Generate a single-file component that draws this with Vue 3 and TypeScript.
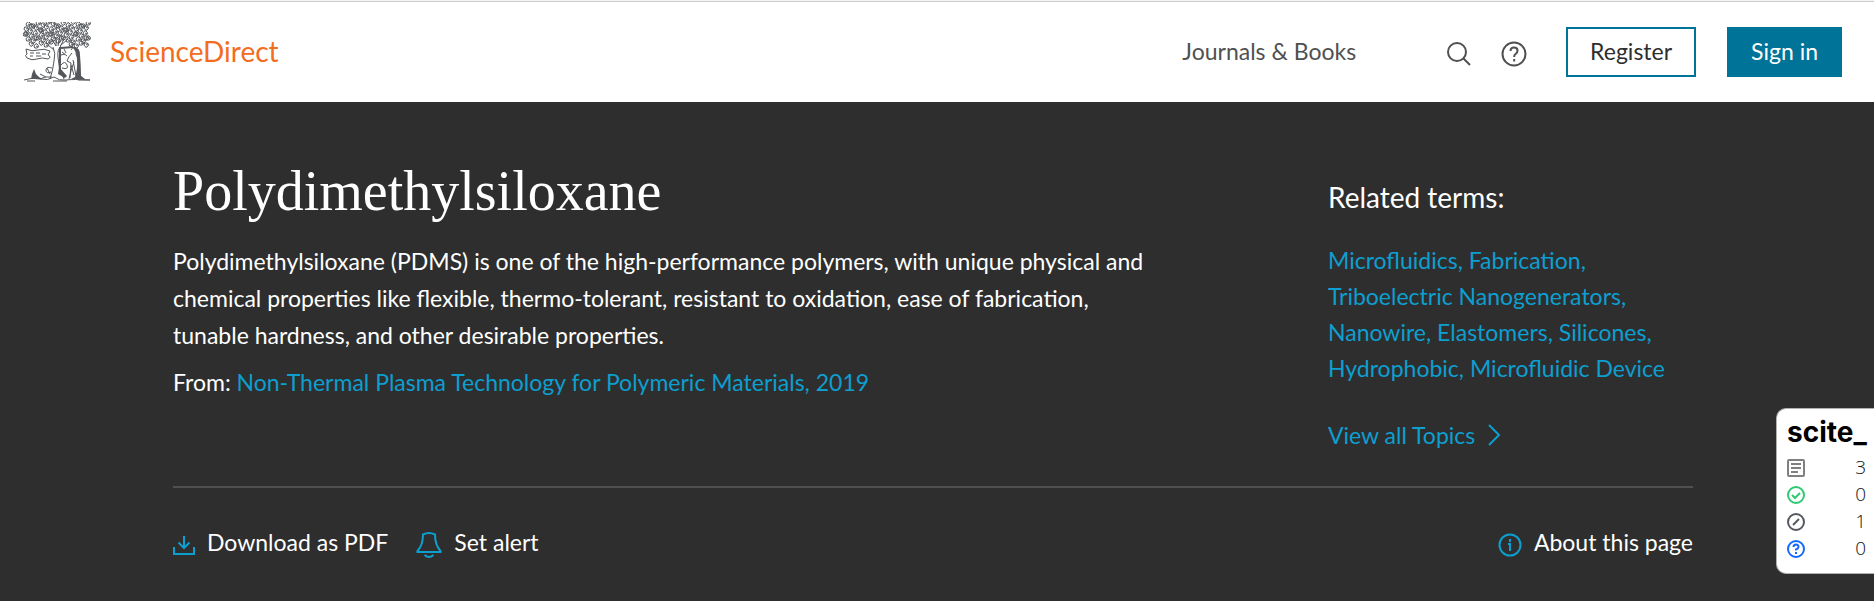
<script setup lang="ts">
interface Term {
  label: string
  last: boolean
}

interface Tally {
  kind: 'total' | 'supporting' | 'contrasting' | 'mentioning'
  label: string
  count: number
}

const terms: Term[] = [
  'Microfluidics',
  'Fabrication',
  'Triboelectric Nanogenerators',
  'Nanowire',
  'Elastomers',
  'Silicones',
  'Hydrophobic',
  'Microfluidic Device',
].map((label, i, all) => ({ label, last: i === all.length - 1 }))

const tallies: Tally[] = [
  { kind: 'total', label: 'Citing publications', count: 3 },
  { kind: 'supporting', label: 'Supporting', count: 0 },
  { kind: 'mentioning', label: 'Mentioning', count: 1 },
  { kind: 'contrasting', label: 'Unclassified', count: 0 },
]

// Curled leaves that fill the crown of the tree, row by row.
function crown(): string {
  const rows: [number, number, number][] = [
    [2, 3, 68],
    [6, 1, 68],
    [10, 0, 68],
    [14, 1, 68],
    [18, 3, 68],
    [22, 6, 30],
    [22, 46, 67],
  ]
  let d = ''
  let n = 0
  for (const [y, from, to] of rows) {
    for (let x = from; x < to - 3; x += 5) {
      n++
      const dy = ((n * 7) % 5) - 2
      const flip = n % 2 ? 1 : -1
      d += `M${x} ${y + dy}q2 ${-4 * flip} 4 ${-flip}q2 ${2 * flip} -1 ${3 * flip}q-3 ${flip} -3 ${-2 * flip}m2 0l2 ${flip}`
    }
  }
  return d
}

const crownPath = crown()
</script>

<template>
  <div class="page">
    <header class="header">
      <a class="brand" href="#">
        <svg class="tree" viewBox="0 0 68 60" aria-hidden="true">
          <path class="leaves" :d="crownPath" />
          <path class="thin" d="M30 25q3 6 1 14q-1 9-4 18M38 24q-4 4-3 11q0 12 6 22M33 24l-4-7M35 24l2-11M37 24l8-7M31 28l-6-5M33 15v9M41 17l-3 6" />
          <path class="thin" d="M3 27q6 3 12 1t12 1l-2 4q4 2 0 4q-6-2-11 0t-10-1q-3-3 0-4zM7 31h4m2 0h4m2 1h4M7 34h3m3 0h5" />
          <path class="heavy" d="M37 25v23l3 5M38 26l12-1" />
          <path class="fill" d="M52 25q5 1 5 8q1 12 1 21l4 3H48l4-2q3-9 2-17q0-8-4-12zM36 45l8 9-2 2-7-4z" />
          <path class="thin" d="M48 28q3-5 6-1l-1 5q3 4 2 10v14M49 31q-4 4-5 8l4 2-1 15M46 57q2-9 5-17M44 34l-5-4m2-3l2 4m-5 2l4-1M38 43q4-5 6 0t-5 3M50 38l3 16M48 43l3 10" />
          <path class="thin" d="M29 46q-6-2-6 2t5 2m-4-4l3 6M29 55q-8-1-12 2M1 58q8-3 16-1t14-2q5 4 12 3t24 0M4 59h8m18 0h14m11-1h12M17 52l6 3M57 54l5 4" />
          <path class="fill" d="M8 57l1-5 2-5 2 5 3 3 3 2z" />
        </svg>
        <span class="wordmark">ScienceDirect</span>
      </a>
      <nav class="nav">
        <a class="nav-link" href="#">Journals &amp; Books</a>
        <button class="icon-button search" type="button" aria-label="Search">
          <svg width="26" height="26" viewBox="0 0 26 26" aria-hidden="true">
            <circle cx="11" cy="11" r="9" />
            <path d="M17 17l7 7" />
          </svg>
        </button>
        <button class="icon-button help" type="button" aria-label="Help">
          <svg width="26" height="26" viewBox="0 0 26 26" aria-hidden="true">
            <circle cx="13" cy="13" r="11.5" />
            <path d="M9.5 10q0-3.500 3.500-3.500t3.500 3.200q0 1.800-1.700 3T13.200 16M13.200 18v2.500" />
          </svg>
        </button>
        <button class="button outline" type="button">Register</button>
        <button class="button solid" type="button">Sign in</button>
      </nav>
    </header>

    <main class="hero">
      <div class="columns">
        <section class="summary">
          <h1>Polydimethylsiloxane</h1>
          <p class="description">
            Polydimethylsiloxane (PDMS) is one of the high-performance polymers, with unique physical and
            chemical properties like flexible, thermo-tolerant, resistant to oxidation, ease of fabrication,
            tunable hardness, and other desirable properties.
          </p>
          <p class="source">From: <a href="#">Non-Thermal Plasma Technology for Polymeric Materials, 2019</a></p>
        </section>
        <aside class="related">
          <h2>Related terms:</h2>
          <p class="terms">
            <template v-for="term in terms" :key="term.label">
              <a href="#">{{ term.label }}<template v-if="!term.last">,</template></a>{{ ' ' }}
            </template>
          </p>
          <a class="all-topics" href="#">
            View all Topics
            <svg width="14" height="22" viewBox="0 0 14 22" aria-hidden="true"><path d="M2 1l10 10L2 21" /></svg>
          </a>
        </aside>
      </div>

      <div class="actions">
        <button class="action" type="button">
          <svg class="download" width="22" height="22" viewBox="0 0 22 22" aria-hidden="true">
            <path d="M1 13v7h20v-7M11 2v12M5.500 8.500l5.500 5.500 5.500-5.500" />
          </svg>
          Download as PDF
        </button>
        <button class="action alert" type="button">
          <svg width="26" height="28" viewBox="0 0 26 28" aria-hidden="true">
            <path d="M7 3.500Q13 .5 19 3.500Q19 14 24.500 20v1h-23v-1Q7 14 7 3.500zM8.500 24q4.500 4 9 0" />
          </svg>
          Set alert
        </button>
        <button class="action about" type="button">
          <svg width="24" height="24" viewBox="0 0 24 24" aria-hidden="true">
            <circle cx="12" cy="12" r="10.500" />
            <path d="M12 6v3M10 11h2v7" />
          </svg>
          About this page
        </button>
      </div>
    </main>

    <aside class="scite">
      <strong class="scite-name">scite_</strong>
      <ul class="tallies">
        <li v-for="tally in tallies" :key="tally.kind" :class="tally.kind">
          <svg width="18" height="18" viewBox="0 0 18 18" role="img" :aria-label="tally.label">
            <template v-if="tally.kind === 'total'">
              <rect x="1" y="1" width="16" height="16" rx="1" />
              <path d="M4 5h10M4 9h10M4 13h7" />
            </template>
            <template v-else>
              <circle cx="9" cy="9" r="8" />
              <path v-if="tally.kind === 'supporting'" d="M5 9l3 3 5-5" />
              <path v-else-if="tally.kind === 'mentioning'" d="M6 12l6-6" />
              <path v-else d="M6.500 7q0-2.500 2.500-2.500T11.500 7Q11.500 8.500 9 9.500v1M9 12v2" />
            </template>
          </svg>
          <span>{{ tally.count }}</span>
        </li>
      </ul>
    </aside>
  </div>
</template>

<style>
body {
  margin: 0;
  background: #2e2e2e;
}
</style>

<style scoped>
.page {
  position: relative;
  font-family: Lato, "Liberation Sans", sans-serif;
  font-size: 23px;
  color: #fff;
}

a {
  color: #0c9fd0;
  text-decoration: none;
}

button {
  padding: 0;
  border: 0;
  background: none;
  font: inherit;
  color: inherit;
  cursor: pointer;
}

svg {
  flex: none;
  fill: none;
  stroke: currentColor;
  stroke-width: 2;
}

h1,
h2,
p,
ul {
  margin: 0;
  padding: 0;
  font-weight: 400;
}

.header {
  box-sizing: border-box;
  display: flex;
  align-items: center;
  justify-content: space-between;
  height: 102px;
  padding: 2px 32px 0 23px;
  background: #fff;
  box-shadow: inset 0 1px #f4f4f4, inset 0 2px #ccc;
  color: #505050;
}

.brand {
  display: flex;
  align-items: center;
  gap: 19px;
}

.tree {
  width: 68px;
  height: 60px;
  color: #53565a;
}

.leaves,
.thin {
  stroke-width: 1;
}

.heavy {
  stroke-width: 2;
}

.fill {
  fill: currentColor;
  stroke: none;
}

.wordmark {
  padding-bottom: 2px;
  font-size: 28px;
  color: #f36d21;
}

.nav {
  display: flex;
  align-items: center;
}

.nav-link {
  padding-bottom: 2px;
  color: #505050;
}

.icon-button {
  display: flex;
  margin-top: 4px;
}

.search {
  margin-left: 90px;
}

.help {
  margin-left: 29px;
}

.button {
  box-sizing: border-box;
  height: 50px;
  padding: 0 22px 2px;
  border: 2px solid #007398;
}

.outline {
  margin-left: 39px;
  color: #2e2e2e;
}

.solid {
  margin-left: 31px;
  background: #007398;
  color: #fff;
}

.hero {
  padding: 55px 181px 0 173px;
}

.columns {
  display: grid;
  grid-template-columns: minmax(0, 1fr) 365px;
  padding-bottom: 33px;
  border-bottom: 2px solid #505050;
}

h1 {
  font-family: "Liberation Serif", serif;
  font-size: 56px;
  line-height: 68px;
}

.description {
  max-width: 988px;
  margin-top: 18px;
  line-height: 37px;
}

.source {
  margin-top: 10px;
  line-height: 37px;
}

.related {
  padding-top: 22px;
}

h2 {
  font-size: 28px;
  line-height: 36px;
}

.terms {
  margin-top: 27px;
  line-height: 36px;
}

.all-topics {
  display: flex;
  align-items: center;
  gap: 12px;
  margin-top: 31px;
  line-height: 36px;
}

.actions {
  display: flex;
  align-items: center;
  padding: 36px 0;
}

.action {
  display: flex;
  align-items: center;
  gap: 12px;
  line-height: 36px;
}

.action svg {
  margin-top: 6px;
  color: #0c9fd0;
}

.alert {
  margin-left: 28px;
}

.about {
  margin-left: auto;
}

.scite {
  position: absolute;
  top: 408px;
  right: 0;
  box-sizing: border-box;
  width: 98px;
  padding: 4px 8px 11px 10px;
  border: 1px solid #b0b0b0;
  border-right: 0;
  border-radius: 10px 0 0 10px;
  background: #fff;
  color: #000;
}

.scite-name {
  display: block;
  margin-bottom: 3px;
  font-family: Inter, sans-serif;
  font-size: 28px;
  font-weight: 700;
  line-height: 38px;
}

.tallies {
  list-style: none;
}

.tallies li {
  display: flex;
  align-items: center;
  justify-content: space-between;
  line-height: 27px;
}

.tallies span {
  font-family: "Open Sans", sans-serif;
  font-size: 19px;
  font-weight: 300;
  color: #111;
}

.total {
  color: #808080;
}

.supporting {
  color: #2dca73;
}

.mentioning {
  color: #55595f;
}

.contrasting {
  color: #146aff;
}
</style>
